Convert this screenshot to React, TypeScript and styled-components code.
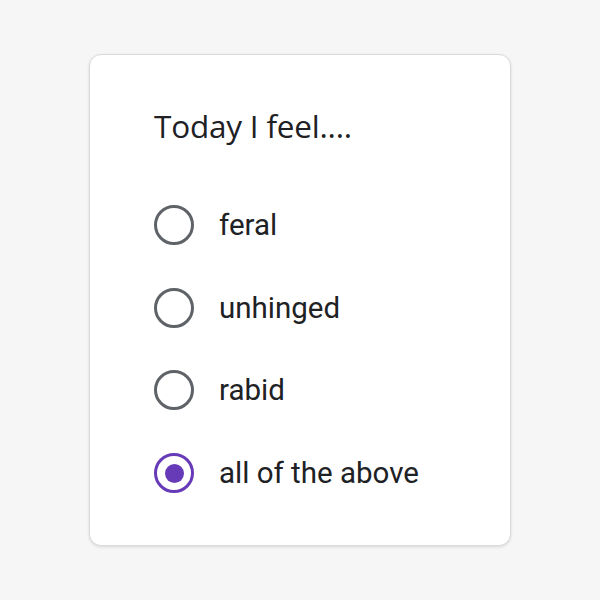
import React, { useState } from "react";
import styled, { createGlobalStyle } from "styled-components";

const GlobalStyle = createGlobalStyle`
  html, body {
    margin: 0;
    padding: 0;
    background: #f6f6f6;
  }
  #root {
    width: 600px;
    height: 600px;
  }
`;

const Page = styled.div`
  width: 600px;
  height: 600px;
  display: flex;
  align-items: center;
  justify-content: center;
  background: #f6f6f6;
`;

const Card = styled.div`
  box-sizing: border-box;
  width: 422px;
  height: 492px;
  background: #ffffff;
  border: 1px solid #dadada;
  border-radius: 12px;
  box-shadow: 0 1px 3px rgba(0, 0, 0, 0.12);
  padding: 50px 30px 0 64px;
  display: flex;
  flex-direction: column;
`;

const Title = styled.h1`
  margin: 0;
  font-family: "Open Sans", "Liberation Sans", sans-serif;
  font-weight: 400;
  font-size: 31.5px;
  letter-spacing: -0.2px;
  line-height: 42px;
  color: #202124;
`;

const Options = styled.div`
  margin-top: 58px;
  display: flex;
  flex-direction: column;
  gap: 42.7px;
`;

const Row = styled.label`
  display: flex;
  align-items: center;
  gap: 25px;
  height: 40px;
  cursor: pointer;
`;

const Circle = styled.span<{ $checked: boolean }>`
  box-sizing: border-box;
  width: 40px;
  height: 40px;
  border-radius: 50%;
  border: 3.5px solid ${(p) => (p.$checked ? "#673ab7" : "#5f6368")};
  display: flex;
  align-items: center;
  justify-content: center;
  flex-shrink: 0;

  &::after {
    content: "";
    width: 19px;
    height: 19px;
    border-radius: 50%;
    background: #673ab7;
    display: ${(p) => (p.$checked ? "block" : "none")};
  }
`;

const Label = styled.span`
  font-family: Roboto, "Liberation Sans", sans-serif;
  font-size: 29.5px;
  color: #202124;
  line-height: 40px;
`;

const choices = ["feral", "unhinged", "rabid", "all of the above"];

export default function App() {
  const [picked, setPicked] = useState(3);
  return (
    <>
      <GlobalStyle />
      <Page>
        <Card>
          <Title>Today I feel....</Title>
          <Options>
            {choices.map((c, i) => (
              <Row key={c} onClick={() => setPicked(i)}>
                <Circle $checked={picked === i} />
                <Label>{c}</Label>
              </Row>
            ))}
          </Options>
        </Card>
      </Page>
    </>
  );
}
